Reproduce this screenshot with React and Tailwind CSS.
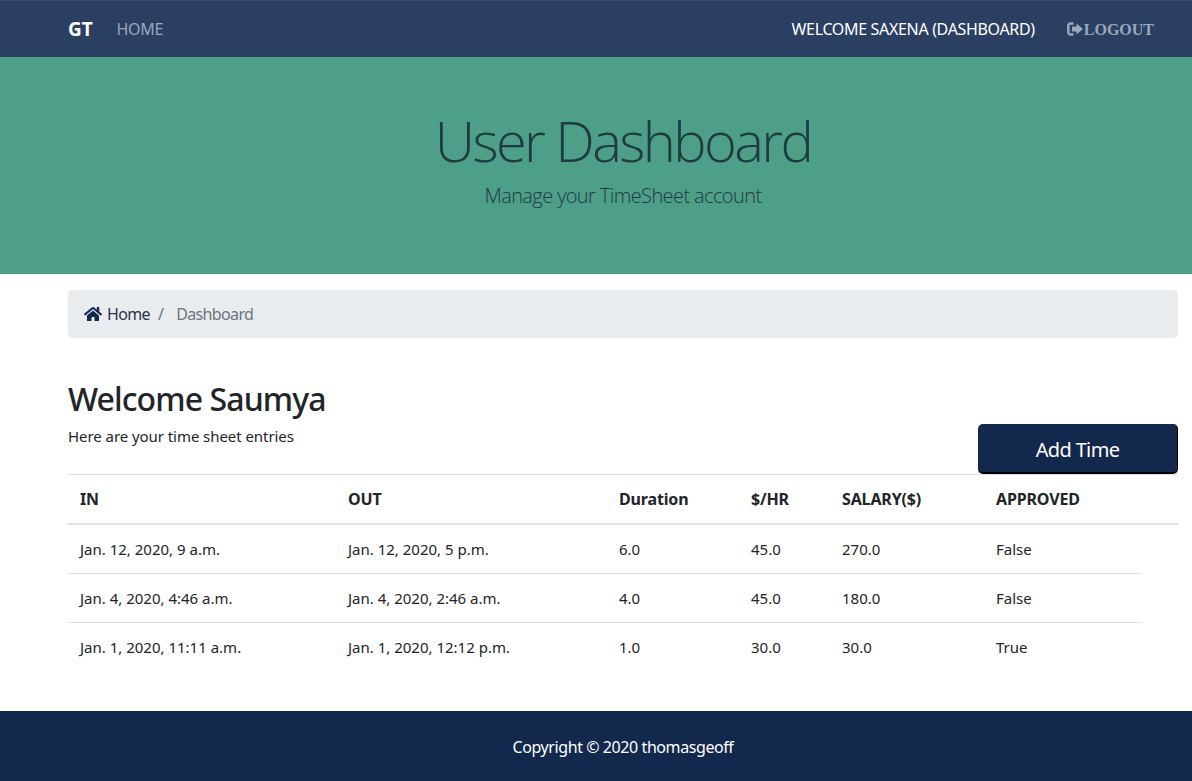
import React from "react";
import { FaHome } from "react-icons/fa";

const rows = [
  ["Jan. 12, 2020, 9 a.m.", "Jan. 12, 2020, 5 p.m.", "6.0", "45.0", "270.0", "False"],
  ["Jan. 4, 2020, 4:46 a.m.", "Jan. 4, 2020, 2:46 a.m.", "4.0", "45.0", "180.0", "False"],
  ["Jan. 1, 2020, 11:11 a.m.", "Jan. 1, 2020, 12:12 p.m.", "1.0", "30.0", "30.0", "True"],
];
const heads = ["IN", "OUT", "Duration", "$/HR", "SALARY($)"];

export default function App() {
  return (
    <div className="min-h-[781px] flex flex-col bg-white text-[#212529] font-['Noto_Sans',sans-serif] text-[15px] tracking-[0px]">
      <header className="h-[57px] border-t border-t-[#3d4f6e] bg-[#2a3f62] pl-[68px] pr-[38px] flex items-center justify-between">
        <nav className="flex items-center">
          <a className="text-[19px] font-bold text-white mr-6 tracking-[-0.1px]">GT</a>
          <a className="text-[#9aa7bd] text-[16px] tracking-[-0.3px]">HOME</a>
        </nav>
        <div className="flex items-center">
          <span className="text-white text-[16px] tracking-[-0.33px] mr-8">WELCOME SAXENA (DASHBOARD)</span>
          <a className="flex items-center text-[#9aa7bd] font-['Liberation_Serif',serif] font-bold text-[16px] tracking-normal pt-[2px]">
            <svg viewBox="0 0 16 14" className="w-4 h-[14px] mr-px shrink-0 -mt-[2px]" aria-hidden="true">
              <path d="M6.5 1.5H3.5A2.2 2.2 0 0 0 1.3 3.7v6.6a2.2 2.2 0 0 0 2.2 2.2H6.5" fill="none" stroke="currentColor" strokeWidth="2.5" />
              <path d="M5 4.6h4.6V1.4L16 7 9.6 12.6V9.4H5z" fill="currentColor" />
            </svg>
            LOGOUT
          </a>
        </div>
      </header>

      <section className="h-[217px] bg-[#4d9f87] flex flex-col items-center pl-[54px] pt-[50px] text-[#1f3a42]">
        <h1 className="font-['Open_Sans',sans-serif] font-light text-[56px] leading-[67px] tracking-[-2.6px]">User Dashboard</h1>
        <p className="font-['Open_Sans',sans-serif] font-light text-[20px] leading-[30px] mt-[7px] tracking-[-0.6px]">Manage your TimeSheet account</p>
      </section>

      <main className="flex-1 pl-[68px] pr-[14px] pt-4">
        <div className="h-12 rounded bg-[#e9ecef] flex items-center px-4 text-[16px] tracking-[-0.65px]">
          <FaHome className="w-[18px] h-4 text-[#12284c] mr-[5px]" />
          <a className="text-[#2b3448]">Home</a>
          <span className="text-[#6c757d] ml-2 mr-[13px]">/</span>
          <span className="text-[#6c757d]">Dashboard</span>
        </div>

        <div className="flex items-end justify-between mt-[40px]">
          <div className="pb-[26px]">
            <h2 className="text-[32px] leading-[42px] font-medium tracking-[-0.9px]">Welcome Saumya</h2>
            <p className="mt-[4px] leading-[24px] tracking-[-0.06px]">Here are your time sheet entries</p>
          </div>
          <button className="w-[200px] h-[50px] pt-1 rounded-[5px] bg-[#12284c] border-b-2 border-r border-b-black border-r-black text-white text-[20px] tracking-[-0.65px]">Add Time</button>
        </div>

        <table className="w-full table-fixed border-t border-t-[#dee2e6] text-left">
          <colgroup>
            <col className="w-[268px]" />
            <col className="w-[271px]" />
            <col className="w-[132px]" />
            <col className="w-[91px]" />
            <col className="w-[154px]" />
            <col className="w-[158px]" />
            <col className="w-[36px]" />
          </colgroup>
          <thead>
            <tr className="h-[49px] border-b-2 border-b-[#dee2e6] text-[16px] tracking-[-0.15px]">
              {heads.map((h) => (
                <th key={h} className="px-3 font-bold">{h}</th>
              ))}
              <th colSpan={2} className="px-3 font-bold">APPROVED</th>
            </tr>
          </thead>
          <tbody>
            {rows.map((r, i) => (
              <tr key={i} className={i === 0 ? "h-[50px]" : "h-[49px]"}>
                {r.map((c, j) => (
                  <td key={j} className={`px-3 ${i < 2 ? "border-b border-b-[#dee2e6]" : ""}`}>{c}</td>
                ))}
                <td />
              </tr>
            ))}
          </tbody>
        </table>
      </main>

      <footer className="h-[70px] bg-[#12284c] flex items-center justify-center text-white text-[16px] tracking-[-0.42px] pl-[54px] pt-[2px]">
        Copyright © 2020 thomasgeoff
      </footer>
    </div>
  );
}
